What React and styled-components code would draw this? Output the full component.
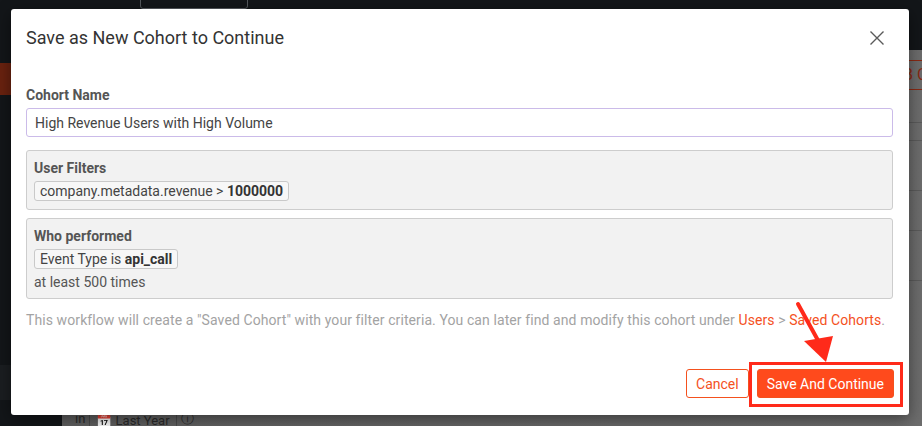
import React from "react";
import styled, { createGlobalStyle } from "styled-components";

const Global = createGlobalStyle`
  html, body { margin: 0; padding: 0; }
  body { font-family: Roboto, "Liberation Sans", sans-serif; }
  * { box-sizing: border-box; }
`;

const Page = styled.div`
  position: relative;
  width: 922px;
  height: 426px;
  overflow: hidden;
  background: #131619;
  display: grid;
  grid-template-columns: 62px 1fr;
  grid-template-rows: 50px 1fr;
`;

const TopBar = styled.div`
  grid-column: 1 / -1;
  background: #131619;
`;

const TopTab = styled.div`
  margin-left: 140px;
  width: 108px;
  height: 12px;
  margin-top: -3px;
  border: 1px solid #55595d;
  border-radius: 3px;
`;

const Sidebar = styled.div`
  background: #131619;
  display: flex;
  flex-direction: column;
`;

const SideItem = styled.div`
  height: ${(p) => p.h}px;
  margin-top: ${(p) => p.mt}px;
  background: ${(p) => p.bg};
`;

const Main = styled.div`
  background: linear-gradient(90deg, #5f5f5f, #6d6d6d);
  display: flex;
  flex-direction: column;
  padding-top: 10px;
`;

const RowLine = styled.div`
  height: ${(p) => p.h}px;
  border-bottom: 1px solid #5b5b5b;
`;

const MainTop = styled.div`
  display: flex;
  justify-content: flex-end;
  height: 30px;
`;

const OutlineBtn = styled.div`
  width: 22px;
  overflow: hidden;
  white-space: nowrap;
  border: 1px solid #8a2a14;
  border-right: 0;
  color: #8a2a14;
  font-size: 16px;
  padding: 5px 2px;
  line-height: 18px;
`;

const BottomRow = styled.div`
  margin-top: auto;
  padding: 0 0 0 13px;
  height: 14px;
  display: flex;
  align-items: flex-start;
  gap: 4px;
  color: #2a2a2a;
  font-size: 13px;
  line-height: 14px;
`;

const BottomChip = styled.div`
  border: 1px solid #4a4a4a;
  border-radius: 3px;
  height: 18px;
  padding: 1px 6px;
  color: #2a2a2a;
  font-size: 13px;
`;

const Modal = styled.div`
  position: absolute;
  left: 11px;
  top: 9px;
  width: 898px;
  height: 406px;
  background: #fff;
  border-radius: 3px;
  box-shadow: 0 4px 16px rgba(0, 0, 0, 0.45);
  display: flex;
  flex-direction: column;
`;

const Header = styled.div`
  display: flex;
  justify-content: space-between;
  align-items: flex-start;
  padding: 18px 16px 0 15px;
  height: 78px;
`;

const Title = styled.h2`
  margin: 0;
  font-weight: 400;
  font-size: 18px;
  line-height: 22px;
  color: #333;
`;

const Close = styled.button`
  border: 0;
  background: none;
  padding: 0;
  margin-top: 3px;
  margin-right: 8px;
  width: 16px;
  height: 16px;
  cursor: pointer;
`;

const Body = styled.div`
  padding: 0 16px 0 15px;
  display: flex;
  flex-direction: column;
`;

const Label = styled.div`
  font-size: 14px;
  font-weight: 700;
  line-height: 16px;
  color: #555;
  margin-bottom: ${(p) => p.mb || 0}px;
`;

const Input = styled.input`
  height: 29px;
  width: 100%;
  border: 1px solid #cbbbe9;
  border-radius: 3px;
  padding: 0 8px;
  font-family: inherit;
  font-size: 14px;
  color: #444;
  outline: none;
`;

const FilterBox = styled.div`
  margin-top: ${(p) => p.mt}px;
  background: #f2f2f2;
  border: 1px solid #cdcdcd;
  border-radius: 3px;
  padding: 9px 7px 8px;
  display: flex;
  flex-direction: column;
  align-items: flex-start;
`;

const Chip = styled.span`
  margin-top: 5px;
  display: inline-block;
  height: 20px;
  line-height: 18px;
  padding: 0 5px;
  border: 1px solid #c9c9c9;
  border-radius: 3px;
  background: #f7f7f7;
  font-size: 14px;
  color: #444;
  b { font-weight: 700; color: #333; }
`;

const Plain = styled.div`
  margin-top: 5px;
  font-size: 14px;
  line-height: 16px;
  color: #555;
`;

const Info = styled.p`
  margin: 13px 0 0;
  font-size: 14px;
  line-height: 16px;
  letter-spacing: 0.09px;
  color: #a3a3a3;
`;

const Link = styled.a`
  color: #f4511e;
  text-decoration: none;
`;

const Footer = styled.div`
  margin-top: auto;
  display: flex;
  justify-content: flex-end;
  gap: 8px;
  padding: 0 15px 17px;
`;

const Button = styled.button`
  height: 29px;
  padding: 0 9px;
  border-radius: 3px;
  font-family: inherit;
  font-size: 14px;
  cursor: pointer;
  border: 1px solid #f4511e;
  background: ${(p) => (p.primary ? "#ff4a1c" : "#fff")};
  color: ${(p) => (p.primary ? "#fff" : "#f4511e")};
`;

const Highlight = styled.div`
  position: absolute;
  left: 749px;
  top: 362px;
  width: 154px;
  height: 45px;
  border: 3px solid #ff2a1a;
  pointer-events: none;
`;

const Arrow = styled.svg`
  position: absolute;
  left: 790px;
  top: 298px;
  pointer-events: none;
`;

export default function App() {
  return (
    <>
      <Global />
      <Page>
        <TopBar>
          <TopTab />
        </TopBar>
        <Sidebar>
          <SideItem h={32} mt={13} bg="#6a220f" />
          <SideItem h={35} mt={270} bg="#1b1e21" />
        </Sidebar>
        <Main>
          <MainTop>
            <OutlineBtn>B C</OutlineBtn>
          </MainTop>
          <RowLine h={33} />
          <RowLine h={18} />
          <RowLine h={50} />
          <RowLine h={40} />
          <RowLine h={50} />
          <BottomRow>
            in <BottomChip>📅 Last Year</BottomChip> ⓘ
          </BottomRow>
        </Main>

        <Modal>
          <Header>
            <Title>Save as New Cohort to Continue</Title>
            <Close aria-label="Close">
              <svg width="16" height="16" viewBox="0 0 16 16">
                <path d="M1.5 1.5 L14.5 14.5 M14.5 1.5 L1.5 14.5" stroke="#5a5a5a" strokeWidth="1.4" />
              </svg>
            </Close>
          </Header>
          <Body>
            <Label mb={5}>Cohort Name</Label>
            <Input defaultValue="High Revenue Users with High Volume" />
            <FilterBox mt={13}>
              <Label>User Filters</Label>
              <Chip>
                company.metadata.revenue &gt; <b>1000000</b>
              </Chip>
            </FilterBox>
            <FilterBox mt={8}>
              <Label>Who performed</Label>
              <Chip>
                Event Type is <b>api_call</b>
              </Chip>
              <Plain>at least 500 times</Plain>
            </FilterBox>
            <Info>
              This workflow will create a "Saved Cohort" with your filter criteria. You can later find and modify this cohort under{" "}
              <Link>Users</Link> &gt; <Link>Saved Cohorts</Link>.
            </Info>
          </Body>
          <Footer>
            <Button>Cancel</Button>
            <Button primary>Save And Continue</Button>
          </Footer>
        </Modal>

        <Highlight />
        <Arrow width="50" height="66" viewBox="0 0 50 66">
          <line x1="8" y1="6" x2="30" y2="46" stroke="#ff2a1a" strokeWidth="4" strokeLinecap="round" />
          <polygon points="14,43 43,38 36,64" fill="#ff2a1a" />
        </Arrow>
      </Page>
    </>
  );
}
